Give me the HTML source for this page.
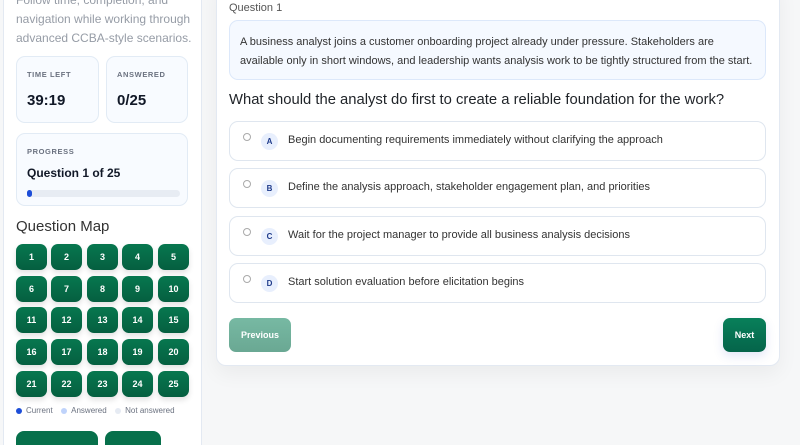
<!DOCTYPE html><html><head><style>
*{box-sizing:border-box;margin:0;padding:0}
html,body{width:800px;height:445px;overflow:hidden}
body{background:#f6f7f8;font-family:"Liberation Sans",sans-serif;position:relative}
.side{position:absolute;left:3px;top:-20px;width:199px;height:480px;background:#fff;border:1px solid #e3e9f2;border-radius:10px}
.intro{position:absolute;left:16px;top:-9px;width:180px;font-size:12px;line-height:19px;color:#969ca6}
.stat{position:absolute;background:#f8fbff;border:1px solid #e2ebf5;border-radius:9px}
.lbl{position:absolute;left:10px;font-size:7.5px;font-weight:bold;letter-spacing:.6px;color:#6b7280}
.val{position:absolute;left:10px;font-weight:bold;color:#111827}
.map{position:absolute;left:16px;top:217px;font-size:15px;color:#333}
.g{position:absolute;width:31px;height:26px;border-radius:7px;background:linear-gradient(#07774f,#055f40);color:#fff;font-size:9px;font-weight:bold;display:flex;align-items:center;justify-content:center;box-shadow:0 3px 6px rgba(0,0,0,.12)}
.main{position:absolute;left:216px;top:-20px;width:564px;height:386px;background:#fff;border:1px solid #e3e9f2;border-radius:10px;box-shadow:0 8px 20px rgba(0,0,0,.05)}
.opt{position:absolute;left:229px;width:537px;height:40px;border:1px solid #dfe6ef;border-radius:9px;background:#fff}
.rad{position:absolute;left:13px;top:11px;width:8px;height:8px;border:1px solid #aaa;border-radius:50%}
.let{position:absolute;left:31px;top:11px;width:17px;height:17px;border-radius:50%;background:#e8effd;color:#1e3a8a;font-size:8px;font-weight:bold;display:flex;align-items:center;justify-content:center}
.ot{position:absolute;left:58px;top:12px;font-size:11px;color:#333}
.btn{position:absolute;top:318px;height:34px;border-radius:7px;color:#fff;font-size:9px;font-weight:bold;display:flex;align-items:center;justify-content:center}
</style></head><body>
<div class="side"></div>
<div class="intro">Follow time, completion, and navigation while working through advanced CCBA-style scenarios.</div>
<div class="stat" style="left:16px;top:56px;width:83px;height:67px"><div class="lbl" style="top:13px">TIME LEFT</div><div class="val" style="top:35px;font-size:15px">39:19</div></div>
<div class="stat" style="left:106px;top:56px;width:82px;height:67px"><div class="lbl" style="top:13px">ANSWERED</div><div class="val" style="top:35px;font-size:15px">0/25</div></div>
<div class="stat" style="left:16px;top:133px;width:172px;height:73px"><div class="lbl" style="top:13px">PROGRESS</div><div class="val" style="top:32px;font-size:12px">Question 1 of 25</div>
<div style="position:absolute;left:10px;top:56px;width:153px;height:7px;border-radius:4px;background:#e7ecf3"><div style="width:5px;height:7px;border-radius:4px;background:#1d4ed8"></div></div></div>
<div class="map" style="top:218px">Question Map</div>
<div class="g" style="left:16px;top:244px">1</div><div class="g" style="left:51px;top:244px">2</div><div class="g" style="left:87px;top:244px">3</div><div class="g" style="left:122px;top:244px">4</div><div class="g" style="left:158px;top:244px">5</div>
<div class="g" style="left:16px;top:276px">6</div><div class="g" style="left:51px;top:276px">7</div><div class="g" style="left:87px;top:276px">8</div><div class="g" style="left:122px;top:276px">9</div><div class="g" style="left:158px;top:276px">10</div>
<div class="g" style="left:16px;top:307px">11</div><div class="g" style="left:51px;top:307px">12</div><div class="g" style="left:87px;top:307px">13</div><div class="g" style="left:122px;top:307px">14</div><div class="g" style="left:158px;top:307px">15</div>
<div class="g" style="left:16px;top:339px">16</div><div class="g" style="left:51px;top:339px">17</div><div class="g" style="left:87px;top:339px">18</div><div class="g" style="left:122px;top:339px">19</div><div class="g" style="left:158px;top:339px">20</div>
<div class="g" style="left:16px;top:371px">21</div><div class="g" style="left:51px;top:371px">22</div><div class="g" style="left:87px;top:371px">23</div><div class="g" style="left:122px;top:371px">24</div><div class="g" style="left:158px;top:371px">25</div>
<div style="position:absolute;left:16px;top:406px;font-size:8px;color:#6b7280;display:flex;align-items:center;gap:4px">
<span style="width:6px;height:6px;border-radius:50%;background:#1d4ed8"></span>Current&nbsp;&nbsp;<span style="width:6px;height:6px;border-radius:50%;background:#bfd3fb"></span>Answered&nbsp;&nbsp;<span style="width:6px;height:6px;border-radius:50%;background:#e6ebf3"></span>Not answered</div>
<div style="position:absolute;left:16px;top:431px;width:82px;height:30px;border-radius:8px;background:#07704b"></div>
<div style="position:absolute;left:105px;top:431px;width:56px;height:30px;border-radius:8px;background:#07704b"></div>
<div class="main"></div>
<div style="position:absolute;left:229px;top:2px;font-size:11px;color:#555">Question 1</div>
<div style="position:absolute;left:229px;top:20px;width:537px;height:60px;background:#f5f9ff;border:1px solid #dce8fa;border-radius:9px;padding:12px 10px;font-size:11px;line-height:19px;color:#333">A business analyst joins a customer onboarding project already under pressure. Stakeholders are available only in short windows, and leadership wants analysis work to be tightly structured from the start.</div>
<div style="position:absolute;left:229px;top:92px;font-size:14.8px;color:#1f2328">What should the analyst do first to create a reliable foundation for the work?</div>
<div class="opt" style="top:121px"><div class="rad"></div><div class="let">A</div><div class="ot">Begin documenting requirements immediately without clarifying the approach</div></div>
<div class="opt" style="top:168px"><div class="rad"></div><div class="let">B</div><div class="ot">Define the analysis approach, stakeholder engagement plan, and priorities</div></div>
<div class="opt" style="top:216px"><div class="rad"></div><div class="let">C</div><div class="ot">Wait for the project manager to provide all business analysis decisions</div></div>
<div class="opt" style="top:263px"><div class="rad"></div><div class="let">D</div><div class="ot">Start solution evaluation before elicitation begins</div></div>
<div class="btn" style="left:229px;width:62px;background:linear-gradient(#77b9a3,#6aa893)">Previous</div>
<div class="btn" style="left:723px;width:43px;background:linear-gradient(#08805a,#05644a);box-shadow:0 4px 10px rgba(60,90,200,.15)">Next</div>
</body></html>
